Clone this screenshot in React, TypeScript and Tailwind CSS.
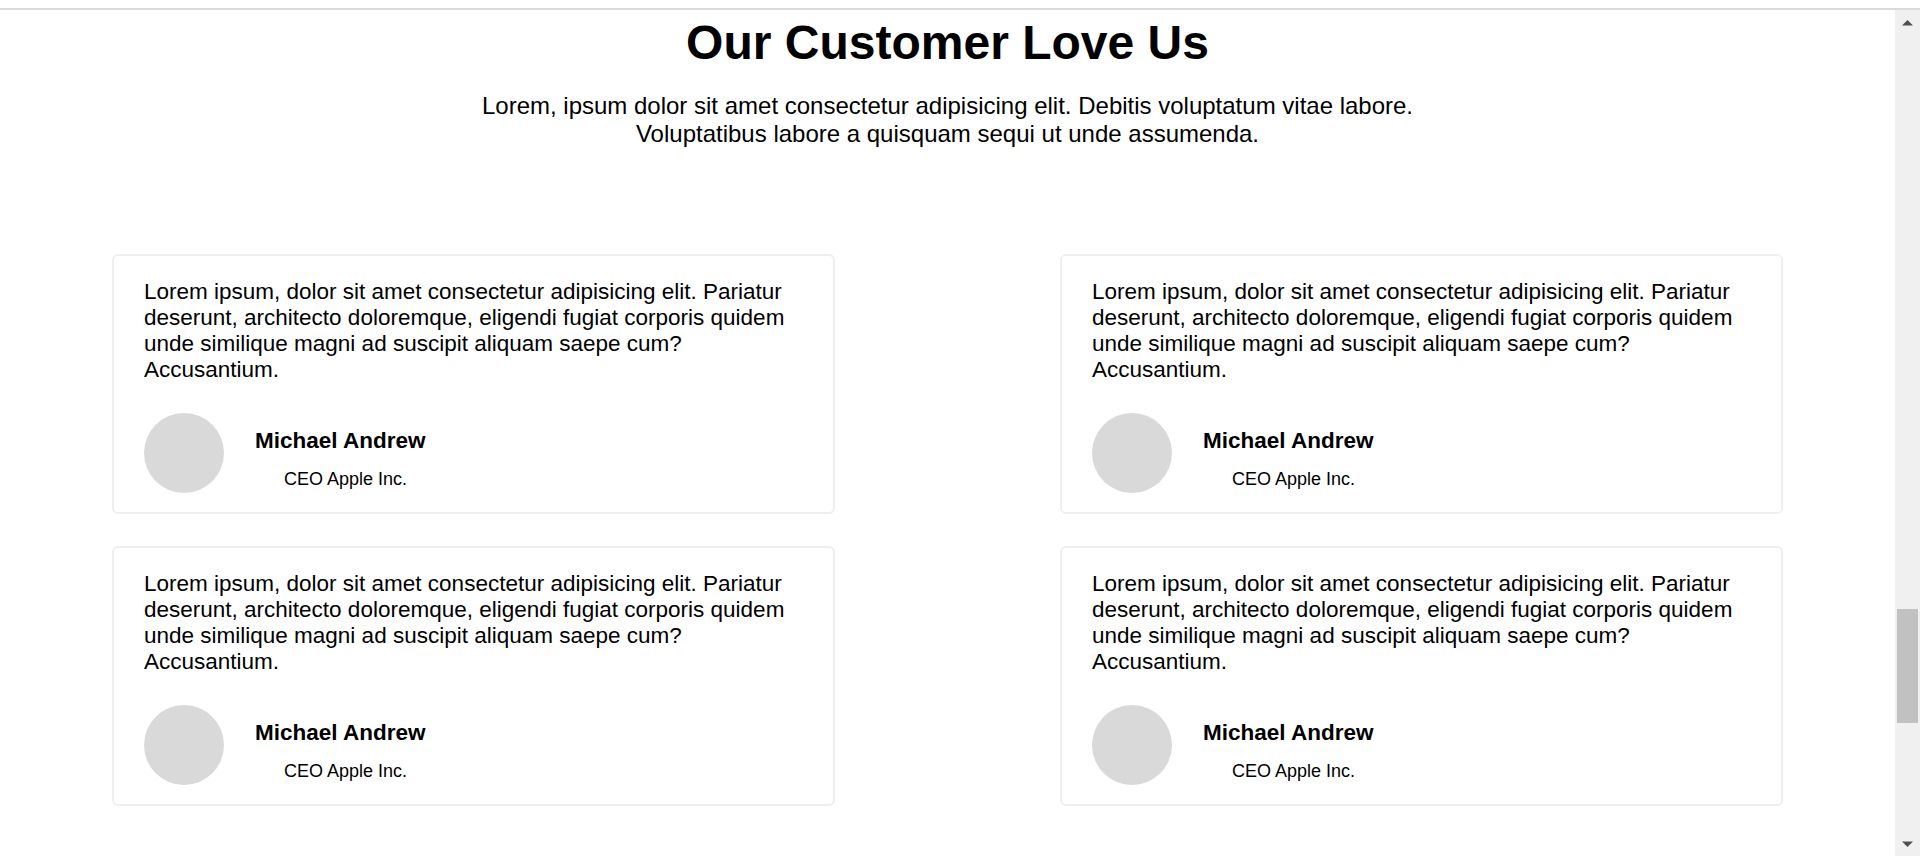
import React from "react";

const testimonials = [0, 1, 2, 3];

function Card() {
  return (
    <div className="border-2 border-[#efefef] rounded-[6px] pt-[22.5px] pb-[19px] px-[30px] bg-white">
      <p className="text-[22.5px] leading-[1.15] text-black">
        Lorem ipsum, dolor sit amet consectetur adipisicing elit. Pariatur deserunt, architecto doloremque, eligendi
        fugiat corporis quidem unde similique magni ad suscipit aliquam saepe cum? Accusantium.
      </p>
      <div className="mt-[31px] flex items-start">
        <div className="w-[80px] h-[80px] rounded-full bg-[#d9d9d9] shrink-0" />
        <div className="ml-[31px] mt-[14.5px]">
          <h3 className="text-[22.5px] leading-[1.15] font-bold text-black">Michael Andrew</h3>
          <p className="mt-[15px] ml-[29px] text-[18px] leading-[1.15] text-black">CEO Apple Inc.</p>
        </div>
      </div>
    </div>
  );
}

function Scrollbar() {
  return (
    <div className="w-[25px] h-[846px] bg-[#f0f0f0] flex flex-col shrink-0">
      <div className="h-[25px] flex items-center justify-center">
        <svg width="11" height="6" viewBox="0 0 11 6">
          <polygon points="0,5.5 5.5,0 11,5.5" fill="#505050" />
        </svg>
      </div>
      <div className="flex-1 flex flex-col">
        <div className="mt-[574px] h-[114px] mx-[2px] bg-[#c1c1c1]" />
      </div>
      <div className="h-[25px] flex items-center justify-center">
        <svg width="11" height="6" viewBox="0 0 11 6">
          <polygon points="0,0.5 11,0.5 5.5,6" fill="#505050" />
        </svg>
      </div>
    </div>
  );
}

export default function App() {
  return (
    <div className="w-[1920px] h-[856px] overflow-hidden bg-white font-['Liberation_Sans',Arial,sans-serif] text-black">
      <div className="h-[10px] bg-white border-b-2 border-[#dadada]" />
      <div className="flex h-[846px]">
        <main className="flex-1 pt-[5px]">
          <h1 className="text-center text-[48px] leading-[1.15] font-bold">Our Customer Love Us</h1>
          <p className="mt-[22px] text-center text-[24px] leading-[1.15]">
            Lorem, ipsum dolor sit amet consectetur adipisicing elit. Debitis voluptatum vitae labore.
            <br />
            Voluptatibus labore a quisquam sequi ut unde assumenda.
          </p>
          <div className="mt-[107px] px-[112px] grid grid-cols-2 gap-x-[225px] gap-y-[32px]">
            {testimonials.map((i) => (
              <Card key={i} />
            ))}
          </div>
        </main>
        <Scrollbar />
      </div>
    </div>
  );
}
